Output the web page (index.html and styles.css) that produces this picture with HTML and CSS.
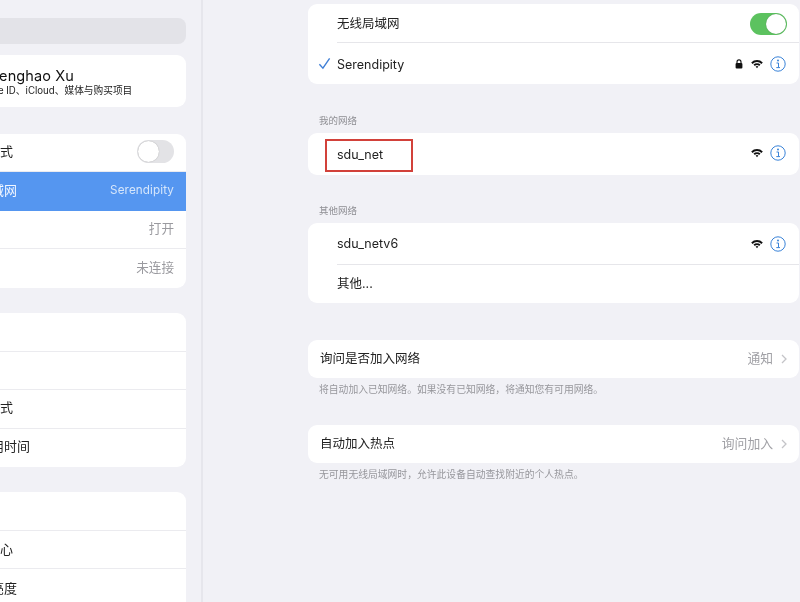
FILE: index.html
```html
<!DOCTYPE html>
<html lang="zh-CN">
<head>
<meta charset="utf-8">
<title>无线局域网</title>
<link rel="stylesheet" href="styles.css">
</head>
<body>
<svg class="defs" width="0" height="0" aria-hidden="true">
  <symbol id="wifi" viewBox="0 0 12 10">
    <path d="M0.2 3.4A8.2 8.2 0 0 1 11.8 3.4L10.4 4.9A6.2 6.2 0 0 0 1.6 4.9Z"/>
    <path d="M2.5 5.6A4.9 4.9 0 0 1 9.5 5.6L8.2 7A3.2 3.2 0 0 0 3.8 7Z"/>
    <path d="M4.6 7.6A2 2 0 0 1 7.4 7.6L6 9.2Z"/>
  </symbol>
  <symbol id="info" viewBox="0 0 16 16">
    <circle cx="8" cy="8" r="7.2" fill="none" stroke="currentColor" stroke-width="1"/>
    <circle cx="8" cy="4.6" r="1" fill="currentColor"/>
    <path d="M6.5 7H8.5V11.3M6.3 11.6H10" fill="none" stroke="currentColor" stroke-width="1"/>
  </symbol>
</svg>
<div class="app">
  <aside class="sidebar">
    <div class="sidebar-inner">
      <div class="search"></div>
      <div class="card profile">
        <div class="profile-name">Fenghao Xu</div>
        <div class="profile-sub">Apple ID、iCloud、媒体与购买项目</div>
      </div>
      <div class="card group-first">
        <div class="side-row"><span class="side-label short">飞行模式</span><span class="switch-off"><span class="knob"></span></span></div>
        <div class="side-row active"><span class="side-label">无线局域网</span><span class="side-value">Serendipity</span></div>
        <div class="side-row"><span class="side-label">蓝牙</span><span class="side-value">打开</span></div>
        <div class="side-row"><span class="side-label">VPN</span><span class="side-value">未连接</span></div>
      </div>
      <div class="card group-second">
        <div class="side-row"><span class="side-label">通知</span></div>
        <div class="side-row"><span class="side-label">声音</span></div>
        <div class="side-row"><span class="side-label short">勿扰模式</span></div>
        <div class="side-row"><span class="side-label">屏幕使用时间</span></div>
      </div>
      <div class="card group-third">
        <div class="side-row"><span class="side-label">通用</span></div>
        <div class="side-row"><span class="side-label short">控制中心</span></div>
        <div class="side-row"><span class="side-label">显示与亮度</span></div>
      </div>
    </div>
  </aside>
  <main class="detail">
    <div class="card panel-top">
      <div class="row first-row">
        <span class="name">无线局域网</span>
        <span class="switch-on"><span class="knob"></span></span>
      </div>
      <div class="row last-row">
        <svg class="check" viewBox="0 0 14 14"><path d="M1.5 7.8L5.3 12L12.5 1.5"/></svg>
        <span class="name">Serendipity</span>
        <span class="icons">
          <svg class="lock" viewBox="0 0 8 10"><path d="M2 4.2V2.9a2 2 0 0 1 4 0V4.2" fill="none" stroke="#111" stroke-width="1.1"/><rect x="0.6" y="4" width="6.8" height="5.6" rx="1" fill="#111"/></svg>
          <svg class="wifi"><use href="#wifi"/></svg>
          <svg class="info"><use href="#info"/></svg>
        </span>
      </div>
    </div>
    <div class="section-label label-mine">我的网络</div>
    <div class="card">
      <div class="row single">
        <span class="name">sdu_net</span>
        <span class="icons">
          <svg class="wifi"><use href="#wifi"/></svg>
          <svg class="info"><use href="#info"/></svg>
        </span>
        <span class="marker"></span>
      </div>
    </div>
    <div class="section-label label-other">其他网络</div>
    <div class="card">
      <div class="row tall-row">
        <span class="name">sdu_netv6</span>
        <span class="icons">
          <svg class="wifi"><use href="#wifi"/></svg>
          <svg class="info"><use href="#info"/></svg>
        </span>
      </div>
      <div class="row short-row">
        <span class="name">其他...</span>
      </div>
    </div>
    <div class="card setting-ask">
      <div class="row setting">
        <span class="setting-name">询问是否加入网络</span>
        <span class="setting-value">通知</span>
        <svg class="chevron" viewBox="0 0 6 10"><path d="M1 1L5 5L1 9"/></svg>
      </div>
    </div>
    <p class="note">将自动加入已知网络。如果没有已知网络，将通知您有可用网络。</p>
    <div class="card setting-hotspot">
      <div class="row setting">
        <span class="setting-name">自动加入热点</span>
        <span class="setting-value">询问加入</span>
        <svg class="chevron" viewBox="0 0 6 10"><path d="M1 1L5 5L1 9"/></svg>
      </div>
    </div>
    <p class="note">无可用无线局域网时，允许此设备自动查找附近的个人热点。</p>
  </main>
</div>
</body>
</html>
```

FILE: styles.css
```css
* { box-sizing: border-box; }
html, body { margin: 0; height: 100%; overflow: hidden; background: #f1f1f6; }
body { font-family: Inter, "Noto Sans CJK SC", sans-serif; color: #1c1c1e; }
.defs { position: absolute; }
.app { display: flex; width: 800px; height: 602px; overflow: hidden; filter: blur(0.45px); }

.card { background: #fff; border-radius: 9px; }

.sidebar { width: 203px; flex: none; overflow: hidden; border-right: 2px solid #e6e6ec; }
.sidebar-inner { width: 286px; margin-left: -100px; padding-top: 18px; }
.search { height: 26px; background: #e3e3e8; border-radius: 8px; }
.profile { margin-top: 11px; height: 52px; padding: 12px 0 0 91px; }
.profile-name { font-size: 14.5px; line-height: 18px; letter-spacing: 0.1px; color: #111; }
.profile-sub { font-size: 9.7px; line-height: 12px; margin-left: -14px; color: #222; }
.group-first { margin-top: 27px; height: 154px; overflow: hidden; }
.group-second { margin-top: 25px; height: 154px; overflow: hidden; }
.group-third { margin-top: 25px; height: 140px; overflow: hidden; }
.side-row { height: 38.5px; display: flex; align-items: center; justify-content: space-between; padding: 0 12px 0 52px; border-bottom: 1px solid #ebebef; }
.group-first .side-row, .group-second .side-row { padding-bottom: 3px; }
.group-first .side-row:first-child { height: 38px; }
.side-row:last-child { border-bottom: 0; }
.side-row.active { background: #5596f0; color: #fff; border-bottom: 0; }
.side-label { font-size: 13px; line-height: 16px; color: #222; }
.side-label.short { margin-left: 9px; }
.active .side-label { color: #f2f7ff; }
.side-value { font-size: 12.6px; color: #9a9a9f; }
.active .side-value { font-size: 11.7px; letter-spacing: 0.1px; color: #d6e6fb; }

.switch-off { width: 37px; height: 23px; border-radius: 12px; background: #e3e3e6; padding: 1px; display: flex; }
.switch-on { width: 37px; height: 22px; border-radius: 11px; background: #5cc25f; padding: 1px; display: flex; justify-content: flex-end; margin-left: auto; margin-right: -1px; }
.knob { width: 21px; height: 21px; border-radius: 50%; background: #fff; box-shadow: 0 0 1px rgba(0,0,0,.35); }
.switch-on .knob { width: 20px; height: 20px; }

.detail { flex: 1; padding: 4px 1px 0 105px; }
.row { position: relative; height: 40px; display: flex; align-items: center; padding: 0 13px 0 29px; }
.row + .row::before { content: ""; position: absolute; left: 29px; right: 0; top: -1px; height: 1px; background: #e6e6ea; }
.row.first-row { height: 39px; }
.row.last-row { height: 41px; }
.row.last-row .name { margin-top: 2px; }
.row.tall-row { height: 42px; }
.row.short-row { height: 38px; }
.row.single { height: 42px; padding-top: 1px; }
.row.single .icons { margin-top: -3px; }
.name { font-size: 12.5px; line-height: 16px; color: #222; }
.check { position: absolute; left: 10px; top: 14px; width: 13px; height: 13px; fill: none; stroke: #3f7fd6; stroke-width: 1.5; }
.icons { margin-left: auto; display: flex; align-items: center; gap: 6px; }
.lock { width: 8px; height: 10px; margin-right: 2px; }
.wifi { width: 12px; height: 10px; fill: #111; }
.info { width: 16px; height: 16px; color: #3a83d8; margin-left: 1px; }

.section-label { font-size: 9.5px; line-height: 12px; color: #8e8e93; padding-left: 11px; }
.label-mine { margin-top: 31px; margin-bottom: 6px; }
.label-other { margin-top: 30px; margin-bottom: 6px; }

.setting-ask { margin-top: 37px; }
.setting-hotspot { margin-top: 29px; }
.row.setting { height: 38px; padding: 0 12px 0 12px; }
.setting-name { font-size: 12.5px; line-height: 16px; color: #222; }
.setting-value { margin-left: auto; font-size: 12.8px; line-height: 16px; color: #a0a0a5; }
.chevron { width: 6px; height: 10px; margin-left: 8px; fill: none; stroke: #c4c4c8; stroke-width: 1.3; }
.note { margin: 6px 0 0; padding-left: 11px; font-size: 9.8px; line-height: 12px; color: #97979c; }

.marker { position: absolute; left: 17px; top: 6px; width: 88px; height: 33px; border: 2px solid #d2413a; }
```
